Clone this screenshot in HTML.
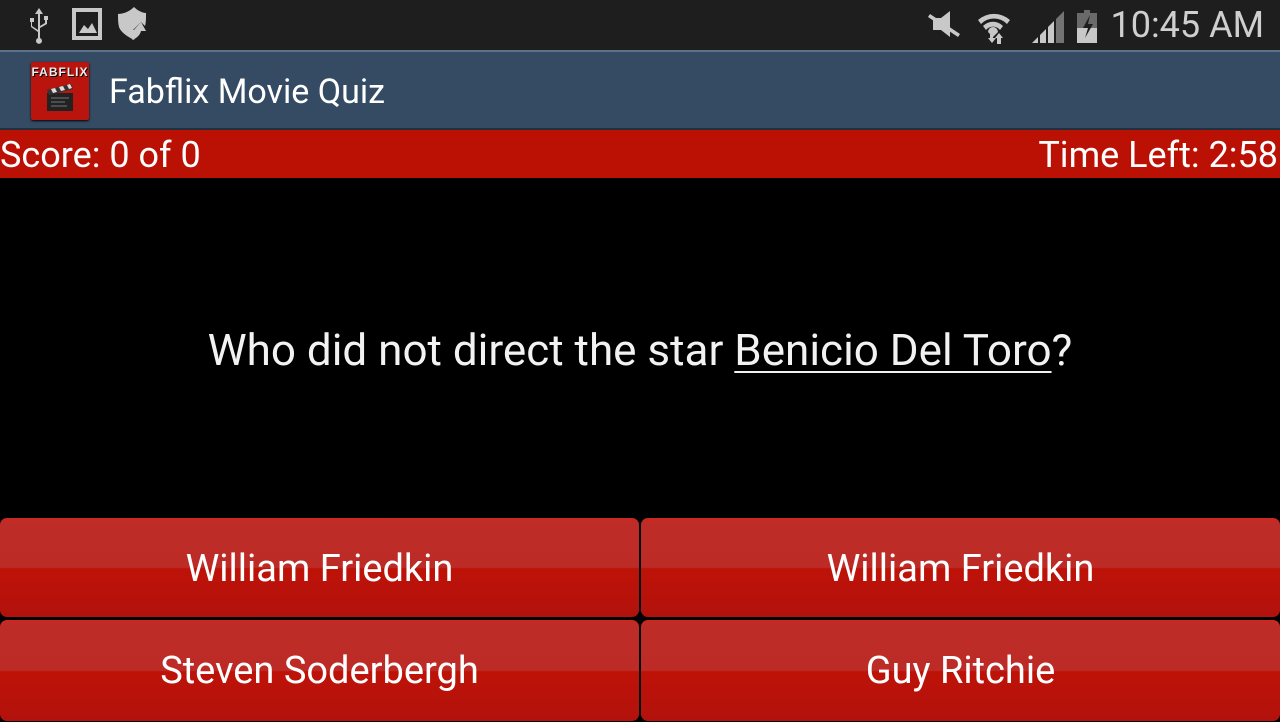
<!DOCTYPE html>
<html><head><meta charset="utf-8"><style>
*{margin:0;padding:0;box-sizing:border-box}
body{width:1280px;height:720px;background:#000;font-family:"Roboto","Liberation Sans",sans-serif;overflow:hidden;position:relative;color:#fff}
.status{position:absolute;top:0;left:0;width:1280px;height:50px;background:#1e1e1e}
.time{position:absolute;right:16px;top:4px;font-size:36px;color:#cfcfcf;line-height:42px}
.bar{position:absolute;top:50px;left:0;width:1280px;height:80px;background:#344b63;border-top:2px solid #5a7189;border-bottom:2px solid #20303f}
.title{position:absolute;left:109px;top:20px;font-size:34px;color:#fff;line-height:40px}
.logo{position:absolute;left:31px;top:10px;width:58px;height:58px;background:#b9140e;border-radius:2px;box-shadow:0 1px 2px #000}
.logo span{position:absolute;left:0;right:0;top:3px;text-align:center;font-size:12px;font-weight:bold;color:#eee;letter-spacing:1px;text-shadow:1px 1px 0 #000;font-family:"Liberation Sans Narrow","Liberation Sans",sans-serif}
.score{position:absolute;top:130px;left:0;width:1280px;height:48px;background:#bb1004;font-size:36px;line-height:50px}
.q{position:absolute;top:325px;left:0;width:1280px;text-align:center;font-size:44px;line-height:50px;color:#f2f2f2}
.q u{text-decoration-thickness:2px;text-underline-offset:6px}
.btn{position:absolute;height:99px;border-radius:7px;background:linear-gradient(#c82a20 0,#be2c28 6%,#bd2b27 50%,#be1208 51%,#b2120c 100%);font-size:38px;text-align:center;line-height:102px;color:#fff}
</style></head><body>
<div class="status">
<svg width="1280" height="50" style="position:absolute;left:0;top:0" fill="#c8c8c8">
<path d="M39 8l-4 6h3v16l-6-4v-4h2v-4h-4v4h1v5l7 5v6a3 3 0 1 0 2 0v-10l7-4v-4h1v-4h-4v4h1v3l-5 3v-12h3z"/>
<path d="M72 8h30v32h-30zM76 12v24h22v-24zM79 33l5-8 4 4 4-6 5 10z" fill-rule="evenodd"/>
<path d="M118 14c6 0 12-3 16-7 3 3 8 6 12 6 0 6 0 10-1 13l-4-4-8 8h5l-4 10c-4-2-13-7-15-13-1-4-1-8-1-13z"/>
<path d="M141 22l-8 9h4c-1 4-3 6-5 9 5-2 8-5 9-9h5z"/>
<path d="M933 18h8l9-7v26l-9-7h-8z M930 14l30 20-2 3-30-20z"/>
<path d="M978 20a24 24 0 0 1 32 0l-3 4a18 18 0 0 0-26 0zm5 6a14 14 0 0 1 20 0l-3 4a9 9 0 0 0-14 0zm5 6a5 5 0 0 1 10 0l-5 5z"/>
<path d="M990 33h3v5h3l-4 5-4-5h2zM997 44v-6h-2l4-5 4 5h-2v6z"/>
<path d="M1032 43l6-6v6zm8-8l6-6v14h-6zm8-8l6-6v22h-6z"/><path d="M1056 19l8-8v32h-8z" opacity=".5"/>
<path d="M1077 13h7v-3h6v3h7v30h-20z" opacity=".45"/><path d="M1077 28h20v15h-20z"/><path d="M1090 15l-7 13h5l-3 10 8-14h-5z" fill="#1e1e1e"/>
</svg>
<div class="time">10:45 AM</div>
</div>
<div class="bar">
<div class="logo"><span>FABFLIX</span>
<svg width="58" height="58" style="position:absolute;left:0;top:0"><rect x="16" y="31" width="26" height="18" fill="#222"/><path d="M16 28l24-6 2 5-24 6z" fill="#333"/><path d="M20 27l4-1 2 4-4 1zM28 25l4-1 2 4-4 1zM36 23l3-1 2 4-3 1z" fill="#ddd"/><path d="M20 36h18M20 40h14M20 44h16" stroke="#777" stroke-width="1"/></svg>
</div>
<div class="title">Fabflix Movie Quiz</div>
</div>
<div class="score"><span style="position:absolute;left:0">Score: 0 of 0</span><span style="position:absolute;right:2px">Time Left: 2:58</span></div>
<div class="q">Who did not direct the star <u>Benicio Del Toro</u>?</div>
<div class="btn" style="left:0;top:518px;width:639px">William Friedkin</div>
<div class="btn" style="left:641px;top:518px;width:639px">William Friedkin</div>
<div class="btn" style="left:0;top:620px;width:639px;height:101px">Steven Soderbergh</div>
<div class="btn" style="left:641px;top:620px;width:639px;height:101px">Guy Ritchie</div>
</body></html>
